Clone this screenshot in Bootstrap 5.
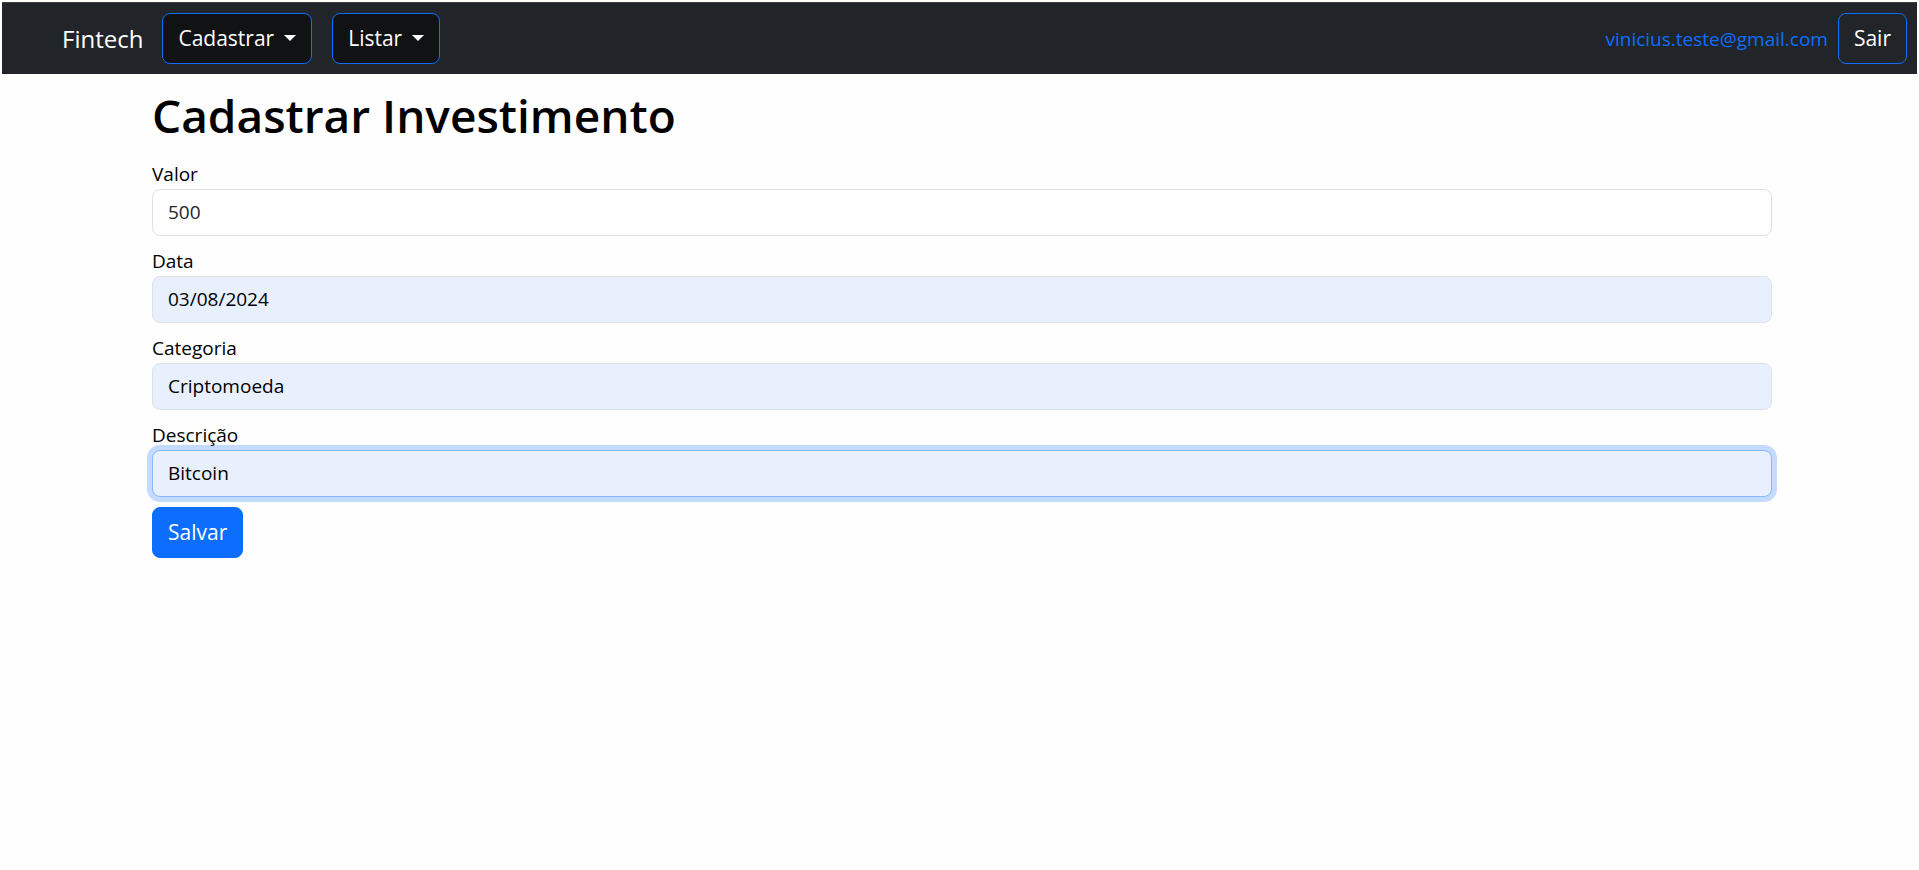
<!DOCTYPE html>
<html lang="pt-BR">
<head>
<meta charset="utf-8">
<meta name="viewport" content="width=device-width, initial-scale=1">
<title>Fintech - Cadastrar Investimento</title>
<link href="https://cdn.jsdelivr.net/npm/bootstrap@5.3.0/dist/css/bootstrap.min.css" rel="stylesheet">
<style>
  body { background: #fefefe; font-family: "Segoe UI", "Open Sans", sans-serif; font-size: 19px; line-height: 30px; color: #000; }
  .topbar { margin: 2px 2px 0; padding: 10px; border-top: 1px solid #3a3d41; background: #212529; }
  .topbar .navbar-brand { margin: 0 19px 0 50px; padding: 0; font-size: 24px; line-height: 36px; color: #fff; }
  .menus { gap: 20px; }
  .account { gap: 10px; }
  .btn { padding: 7px 15px; border-radius: 8px; font-size: 21px; line-height: 35px; }
  .btn-outline-primary { --bs-btn-color: #fff; }
  .btn-menu { --bs-btn-bg: #101214; }
  .btn-menu::after { margin-left: 10px; border-width: 6px 6px 0; }
  .user-link { color: #0d6efd; }
  .page { padding-left: 5px; }
  .page .container { max-width: 1650px; padding: 13px 15px 0; }
  h1 { margin-bottom: 16px; font-size: 46px; line-height: 56px; font-weight: 600; }
  .field { margin-bottom: 10px; }
  .field label { display: block; }
  .form-control { padding: 7px 15px; border-radius: 8px; font-size: 19px; line-height: 31px; color: #212529; }
  .form-control.filled { background: #e8f0fe; color: #000; }
  .form-control:focus { border-color: #86b7fe; box-shadow: 0 0 0 5px #c2dbfe; }
</style>
</head>
<body>
<nav class="topbar navbar navbar-expand" data-bs-theme="dark">
  <a class="navbar-brand" href="#">Fintech</a>
  <div class="d-flex menus">
    <div class="dropdown"><button type="button" class="btn btn-outline-primary btn-menu dropdown-toggle" data-bs-toggle="dropdown">Cadastrar</button></div>
    <div class="dropdown"><button type="button" class="btn btn-outline-primary btn-menu dropdown-toggle" data-bs-toggle="dropdown">Listar</button></div>
  </div>
  <div class="d-flex align-items-center ms-auto account">
    <a class="user-link text-decoration-none" href="#">vinicius.teste@gmail.com</a>
    <button type="button" class="btn btn-outline-primary">Sair</button>
  </div>
</nav>
<main class="page">
  <div class="container">
    <h1>Cadastrar Investimento</h1>
    <form>
      <div class="field"><label for="valor">Valor</label><input class="form-control" id="valor" type="text" value="500"></div>
      <div class="field"><label for="data">Data</label><input class="form-control filled" id="data" type="text" value="03/08/2024"></div>
      <div class="field"><label for="categoria">Categoria</label><input class="form-control filled" id="categoria" type="text" value="Criptomoeda"></div>
      <div class="field"><label for="descricao">Descrição</label><input class="form-control filled" id="descricao" type="text" value="Bitcoin" autofocus></div>
      <button type="submit" class="btn btn-primary">Salvar</button>
    </form>
  </div>
</main>
<script src="https://cdn.jsdelivr.net/npm/bootstrap@5.3.0/dist/js/bootstrap.bundle.min.js"></script>
</body>
</html>
